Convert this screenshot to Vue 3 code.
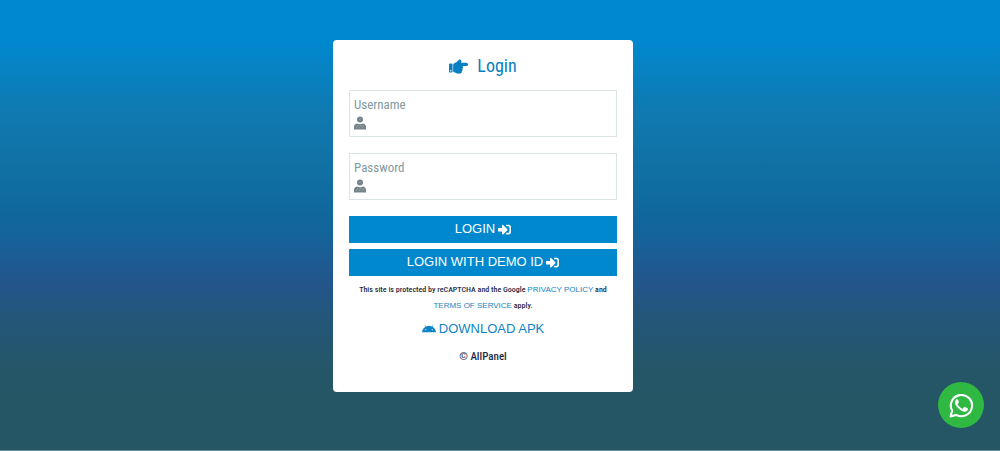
<script setup>
import { ref } from 'vue'

const username = ref('')
const password = ref('')

const signInPath =
  'M416 448h-84c-6.600 0-12-5.400-12-12v-40c0-6.600 5.400-12 12-12h84c17.700 0 32-14.300 32-32V160c0-17.700-14.300-32-32-32h-84c-6.600 0-12-5.400-12-12V76c0-6.600 5.400-12 12-12h84c53 0 96 43 96 96v192c0 53-43 96-96 96zm-47-201L201 79c-15-15-41-4.500-41 17v96H24c-13.300 0-24 10.700-24 24v96c0 13.300 10.700 24 24 24h136v96c0 21.500 26 32 41 17l168-168c9.300-9.400 9.300-24.600 0-34z'
</script>

<template>
  <div class="page">
    <main class="card">
      <h1 class="title">
        <svg class="hand" viewBox="0 0 512 512" aria-hidden="true">
          <path d="M512 199.652c0 23.625-20.65 43.826-44.8 43.826h-99.851c16.34 17.048 18.346 49.766-6.299 70.944 14.288 22.829 2.147 53.017-16.45 62.315C353.574 425.878 322.654 448 272 448c-2.746 0-13.276-.203-16-.195-61.971.168-76.894-31.065-123.731-38.315C120.596 407.683 112 397.599 112 385.786V214.261l.002-.001c.011-18.366 10.607-35.889 28.464-43.845 28.886-12.994 95.413-49.038 107.534-77.323 7.797-18.194 21.384-29.084 40-29.092 34.222-.014 57.752 35.098 44.119 66.908-3.583 8.359-8.312 16.67-14.153 24.918H467.2c23.45 0 44.8 20.543 44.8 43.826zM96 200v192c0 13.255-10.745 24-24 24H24c-13.255 0-24-10.745-24-24V200c0-13.255 10.745-24 24-24h48c13.255 0 24 10.745 24 24zM68 368c0-11.046-8.954-20-20-20s-20 8.954-20 20 8.954 20 20 20 20-8.954 20-20z" />
        </svg>
        Login
      </h1>
      <form @submit.prevent>
        <label class="field">
          <input v-model="username" type="text" placeholder="Username" aria-label="Username" />
          <svg class="user" viewBox="0 0 12 14" aria-hidden="true">
            <circle cx="6" cy="3.500" r="3" />
            <path d="M0 13.500v-2.500Q0 8 3 7.500q3 1.500 6 0 3 .5 3 3.500v2.500z" />
            <path class="weave" d="M2 12l2-3M5 12l2-3M8 12l2-3M5 4l2-2" />
          </svg>
        </label>
        <label class="field">
          <input v-model="password" type="password" placeholder="Password" aria-label="Password" />
          <svg class="user" viewBox="0 0 12 14" aria-hidden="true">
            <circle cx="6" cy="3.500" r="3" />
            <path d="M0 13.500v-2.500Q0 8 3 7.500q3 1.500 6 0 3 .5 3 3.500v2.500z" />
            <path class="weave" d="M2 12l2-3M5 12l2-3M8 12l2-3M5 4l2-2" />
          </svg>
        </label>
        <button class="btn" type="submit">
          LOGIN
          <svg viewBox="0 0 512 512" aria-hidden="true"><path :d="signInPath" /></svg>
        </button>
        <button class="btn" type="button">
          LOGIN WITH DEMO ID
          <svg viewBox="0 0 512 512" aria-hidden="true"><path :d="signInPath" /></svg>
        </button>
      </form>
      <p class="legal">
        This site is protected by reCAPTCHA and the Google
        <a href="#">PRIVACY POLICY</a> and <a href="#">TERMS OF SERVICE</a> apply.
      </p>
      <a class="apk" href="#">
        <svg viewBox="0 120 576 270" aria-hidden="true">
          <path d="M420.550 301.930a24 24 0 1 1 24-24 24 24 0 0 1-24 24m-265.100 0a24 24 0 1 1 24-24 24 24 0 0 1-24 24m273.700-144.480 47.940-83a10 10 0 1 0-17.270-10l-48.540 84.070a301.250 301.250 0 0 0-246.560 0L116.180 64.450a10 10 0 1 0-17.270 10l47.940 83C64.530 202.220 8.240 285.550 0 384h576c-8.240-98.450-64.540-181.780-146.850-226.550" />
        </svg>
        DOWNLOAD APK
      </a>
      <p class="copy">© AllPanel</p>
    </main>
    <a class="chat" href="#" aria-label="WhatsApp">
      <svg viewBox="0 0 24 24" aria-hidden="true">
        <path class="bubble" d="M1.500 22.500l1.500-5.500A10.200 10.200 0 1 1 7 21z" />
        <path d="M8.500 6.300c-.4-.5-1.200-.4-1.700.1C4.700 8.600 6 11.200 7.800 13.400c2 2.500 4.600 4.200 7 4.500 1.600.2 3.200-.9 3.400-2.300.1-.5 0-.7-.4-.9l-2.500-1.200c-.4-.2-.6-.1-.9.2l-.9 1.200c-.3.3-.5.3-.9.1-2-.9-3.300-2.200-4.200-3.900-.2-.4-.1-.6.2-.9l.7-1c.2-.3.2-.5.1-.8z" />
      </svg>
    </a>
  </div>
</template>

<style>
body {
  margin: 0;
}
</style>

<style scoped>
.page {
  box-sizing: border-box;
  min-height: 100vh;
  padding: 40px 50px 40px 16px;
  border-bottom: 1px solid #6b8e9e;
  background: linear-gradient(#0088cf 0%, #0088cf 9%, #1079b0 25%, #1074a8 33%, #10679c 48%, #13649a 52%, #1c5b92 58%, #24558a 64%, #23567a 70%, #255667 83%, #255664 100%);
  color: #1e2b45;
  font-family: "Roboto Condensed", "Liberation Sans Narrow", "Liberation Sans", sans-serif;
}

.card {
  box-sizing: border-box;
  max-width: 300px;
  margin: 0 auto;
  padding: 14px 16px 26px;
  border-radius: 4px;
  background: #fff;
  text-align: center;
}

svg {
  fill: currentColor;
}

.title {
  display: flex;
  align-items: center;
  justify-content: center;
  gap: 9px;
  margin: 0 0 12px;
  color: #087fc0;
  font-size: 18px;
  font-weight: 400;
  line-height: 24px;
}

.hand {
  width: 19px;
  height: 19px;
}

.field {
  display: block;
  margin-bottom: 16px;
  padding: 4px;
  border: 1px solid #dce3e5;
  text-align: left;
}

.field input {
  display: block;
  box-sizing: border-box;
  width: 100%;
  height: 20px;
  padding: 0;
  border: 0;
  outline: 0;
  background: transparent;
  color: #1e2b45;
  font: 13px/20px "Roboto Condensed", "Liberation Sans Narrow", "Liberation Sans", sans-serif;
}

.field input::placeholder {
  color: #7f9a9f;
  opacity: 1;
}

.user {
  display: block;
  width: 12px;
  height: 14px;
  margin: 1px 0 2px;
  color: #758389;
}

.weave {
  fill: none;
  stroke: #a9b3b6;
  stroke-width: 0.6;
}

.btn {
  display: flex;
  align-items: center;
  justify-content: center;
  gap: 3px;
  width: 100%;
  height: 27px;
  margin: 0 0 6px;
  padding: 0 0 1px;
  border: 0;
  background: #0088cf;
  color: #fff;
  font: 13px/20px "Liberation Sans", Arial, sans-serif;
}

.btn svg {
  width: 13px;
  height: 13px;
}

a {
  color: #1684bd;
  text-decoration: none;
}

.legal {
  margin: 0 8px 6px;
  font-size: 8px;
  font-weight: 500;
  line-height: 16px;
}

.legal a {
  font-family: "Liberation Sans", Arial, sans-serif;
  font-weight: 400;
}

.apk {
  display: flex;
  align-items: center;
  justify-content: center;
  gap: 3px;
  color: #0f83c4;
  font: 13px/18px "Liberation Sans", Arial, sans-serif;
}

.apk svg {
  width: 14px;
  height: 8px;
}

.copy {
  margin: 10px 0 0;
  font-size: 11px;
  font-weight: 500;
  line-height: 18px;
}

.chat {
  position: fixed;
  right: 16px;
  bottom: 23px;
  display: flex;
  align-items: center;
  justify-content: center;
  width: 46px;
  height: 46px;
  border-radius: 50%;
  background: #2fb842;
  color: #fff;
}

.chat svg {
  width: 25px;
  height: 25px;
}

.bubble {
  fill: none;
  stroke: currentColor;
  stroke-width: 2;
  stroke-linejoin: round;
}
</style>
